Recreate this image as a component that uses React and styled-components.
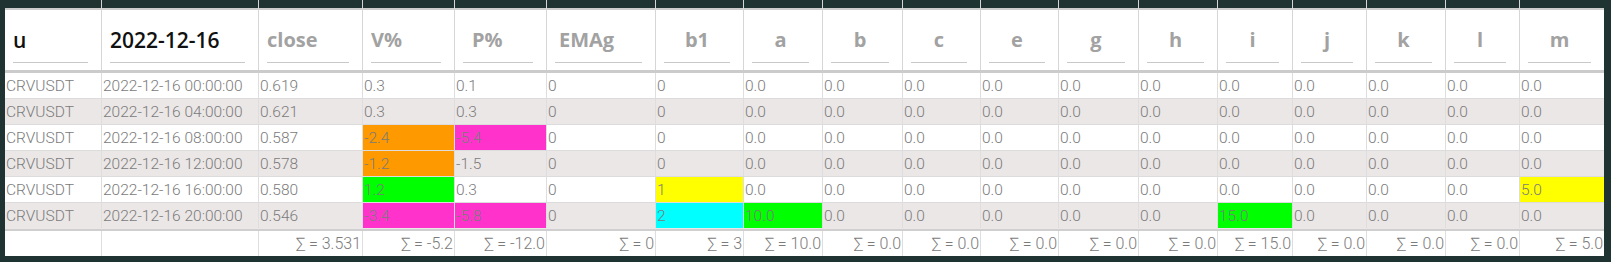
import React from "react";
import styled, { createGlobalStyle } from "styled-components";

const DARK = "#1f3333";

const Global = createGlobalStyle`
  html, body { margin: 0; padding: 0; background: ${DARK}; }
  * { box-sizing: border-box; }
`;

const COLS = [
  { key: "u", label: "u", w: 97, strong: true, align: "left", indent: 0 },
  { key: "d", label: "2022-12-16", w: 157, strong: true, align: "left", indent: 0 },
  { key: "close", label: "close", w: 104, align: "left", indent: 0 },
  { key: "v", label: "V%", w: 92, align: "left", indent: 0 },
  { key: "p", label: "P%", w: 92, align: "left", indent: 9 },
  { key: "emag", label: "EMAg", w: 109, align: "left", indent: 4 },
  { key: "b1", label: "b1", w: 88, align: "center" },
  { key: "a", label: "a", w: 79, align: "center" },
  { key: "b", label: "b", w: 80, align: "center" },
  { key: "c", label: "c", w: 78, align: "center" },
  { key: "e", label: "e", w: 78, align: "center" },
  { key: "g", label: "g", w: 80, align: "center" },
  { key: "h", label: "h", w: 79, align: "center" },
  { key: "i", label: "i", w: 75, align: "center" },
  { key: "j", label: "j", w: 74, align: "center" },
  { key: "k", label: "k", w: 79, align: "center" },
  { key: "l", label: "l", w: 74, align: "center" },
  { key: "m", label: "m", w: 84, align: "center" },
];

const TEMPLATE = COLS.map((c) => `${c.w}px`).join(" ");

const TONES = {
  orange: "#ff9900",
  magenta: "#ff33cc",
  green: "#00ff00",
  yellow: "#ffff00",
  cyan: "#00ffff",
};

const z = "0.0";
const ROWS = [
  { t: "00:00:00", vals: ["0.619", "0.3", "0.1", "0", "0", z, z, z, z, z, z, z, z, z, z, z], tones: {} },
  { t: "04:00:00", vals: ["0.621", "0.3", "0.3", "0", "0", z, z, z, z, z, z, z, z, z, z, z], tones: {} },
  { t: "08:00:00", vals: ["0.587", "-2.4", "-5.4", "0", "0", z, z, z, z, z, z, z, z, z, z, z], tones: { v: "orange", p: "magenta" } },
  { t: "12:00:00", vals: ["0.578", "-1.2", "-1.5", "0", "0", z, z, z, z, z, z, z, z, z, z, z], tones: { v: "orange" } },
  { t: "16:00:00", vals: ["0.580", "1.2", "0.3", "0", "1", z, z, z, z, z, z, z, z, z, z, "5.0"], tones: { v: "green", b1: "yellow", m: "yellow" } },
  { t: "20:00:00", vals: ["0.546", "-3.4", "-5.8", "0", "2", "10.0", z, z, z, z, z, "15.0", z, z, z, z], tones: { v: "magenta", p: "magenta", b1: "cyan", a: "green", i: "green" } },
];

const SUMS = ["", "", "3.531", "-5.2", "-12.0", "0", "3", "10.0", "0.0", "0.0", "0.0", "0.0", "0.0", "15.0", "0.0", "0.0", "0.0", "5.0"];

const Frame = styled.div`
  width: 1611px;
  height: 262px;
  padding: 0 7px 6px 5px;
  background: ${DARK};
  overflow: hidden;
`;

const Sheet = styled.div`
  width: 1599px;
  background: #ffffff;
`;

const Row = styled.div`
  display: grid;
  grid-template-columns: ${TEMPLATE};
`;

const HeaderRow = styled(Row)`
  height: 73px;
  border-bottom: 3px solid #cbcbcb;
  background: ${DARK};
`;

const HeaderCell = styled.div`
  height: 70px;
  display: flex;
  align-items: flex-end;
  padding: 0 13px 7px 8px;
  background: linear-gradient(to bottom, ${DARK} 0 8px, #cccccc 8px 10px, #ffffff 10px);
  border-right: 1px solid #d6d6d6;
  &:last-child { border-right: none; }
`;

const HeaderLabel = styled.div`
  width: 100%;
  height: 46px;
  display: flex;
  align-items: center;
  justify-content: ${(p) => (p.$align === "center" ? "center" : "flex-start")};
  padding-left: ${(p) => p.$indent || 0}px;
  border-bottom: 1px solid #c9c9c9;
  font-family: "Open Sans", "Lato", sans-serif;
  font-weight: ${(p) => (p.$strong ? 600 : 700)};
  font-size: ${(p) => (p.$strong ? "21px" : "20px")};
  color: ${(p) => (p.$strong ? "#111111" : "#a2a2a2")};
  white-space: nowrap;
  overflow: hidden;
`;

const BodyRow = styled(Row)`
  height: 26px;
  background: ${(p) => (p.$striped ? "#ebe7e6" : "#ffffff")};
  border-bottom: 1px solid #dcdcdc;
  &:last-of-type { border-bottom: none; }
`;

const Cell = styled.div`
  height: 25px;
  display: flex;
  align-items: center;
  padding-left: 1px;
  background: ${(p) => (p.$tone ? TONES[p.$tone] : "transparent")};
  border-right: 1px solid #dedede;
  font-family: "Roboto", "Liberation Sans", sans-serif;
  font-weight: 300;
  font-size: 15.5px;
  color: #7b7b7b;
  white-space: nowrap;
  overflow: hidden;
  &:last-child { border-right: none; }
`;

const Body = styled.div``;

const FooterRow = styled(Row)`
  height: 27px;
  border-top: 2px solid #cfcfcf;
  background: #ffffff;
`;

const SumCell = styled.div`
  height: 25px;
  display: flex;
  align-items: center;
  justify-content: flex-end;
  padding-right: 1px;
  border-right: 1px solid #dedede;
  font-family: "Roboto", "Liberation Sans", sans-serif;
  font-weight: 300;
  font-size: 16px;
  color: #7b7b7b;
  white-space: nowrap;
  &:last-child { border-right: none; }
`;

export default function App() {
  return (
    <>
      <Global />
      <Frame>
        <Sheet>
          <HeaderRow>
            {COLS.map((c) => (
              <HeaderCell key={c.key}>
                <HeaderLabel $strong={c.strong} $align={c.align} $indent={c.indent}>
                  {c.label}
                </HeaderLabel>
              </HeaderCell>
            ))}
          </HeaderRow>
          <Body>
            {ROWS.map((r, i) => (
              <BodyRow key={r.t} $striped={i % 2 === 1}>
                <Cell>CRVUSDT</Cell>
                <Cell>{`2022-12-16 ${r.t}`}</Cell>
                {r.vals.map((v, j) => {
                  const key = COLS[j + 2].key;
                  return (
                    <Cell key={key} $tone={r.tones[key]}>
                      {v}
                    </Cell>
                  );
                })}
              </BodyRow>
            ))}
          </Body>
          <FooterRow>
            {SUMS.map((s, j) => (
              <SumCell key={COLS[j].key}>{s ? `∑ = ${s}` : ""}</SumCell>
            ))}
          </FooterRow>
        </Sheet>
      </Frame>
    </>
  );
}
